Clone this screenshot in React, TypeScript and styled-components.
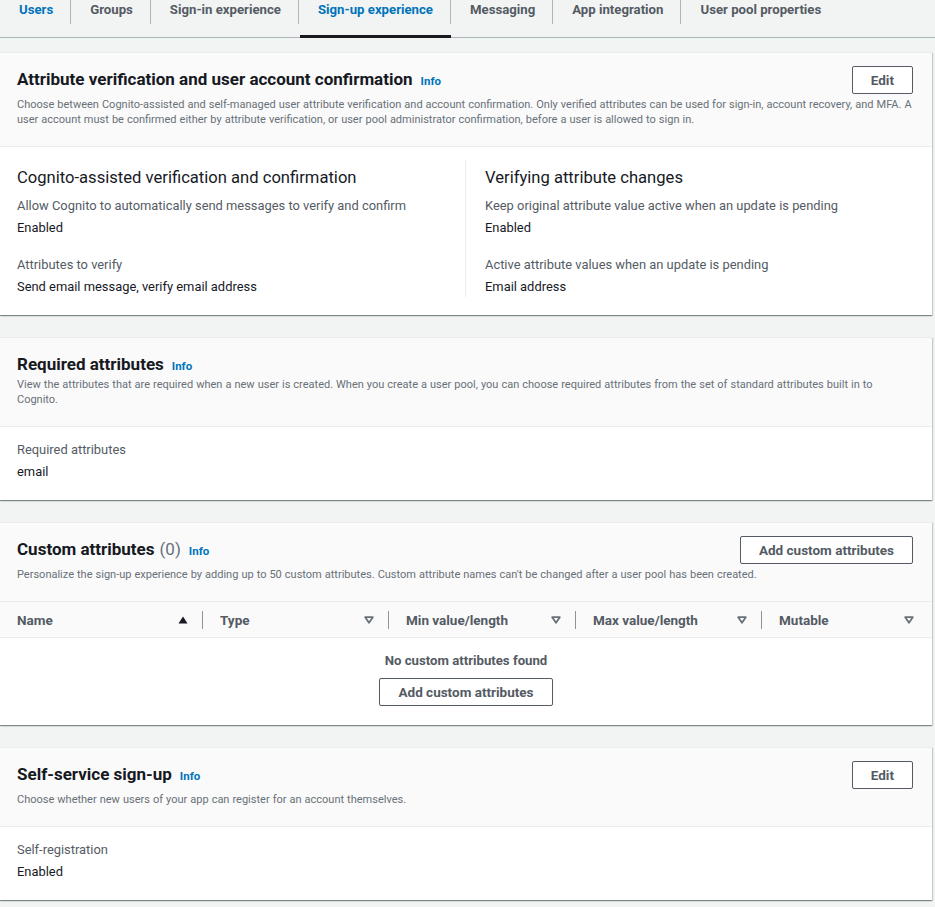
import React from "react";
import styled, { createGlobalStyle } from "styled-components";

const FONT = `"Amazon Ember", Roboto, "Helvetica Neue", Arial, sans-serif`;

const GlobalStyle = createGlobalStyle`
  html, body { margin: 0; padding: 0; }
  body {
    background: #f2f3f3;
    font-family: ${FONT};
    color: #16191f;
    -webkit-font-smoothing: antialiased;
  }
  * { box-sizing: border-box; }
`;

const Page = styled.div`
  width: 935px;
  min-height: 907px;
  background: #f2f3f3;
  overflow: hidden;
`;

const TabBar = styled.nav`
  display: flex;
  height: 38px;
  border-bottom: 1px solid #aab7b8;
`;

const Tab = styled.div<{ $active?: boolean; $link?: boolean; $last?: boolean }>`
  position: relative;
  padding: 1px 18px 0 19px;
  font-size: 13.2px;
  line-height: 18px;
  font-weight: 700;
  color: ${(p) => (p.$active || p.$link ? "#0073bb" : "#545b64")};
  white-space: nowrap;
  &::after {
    content: "";
    display: ${(p) => (p.$last ? "none" : "block")};
    position: absolute;
    right: 0;
    top: 0;
    width: 1px;
    height: 24px;
    background: #aab7b8;
  }
  &::before {
    content: "";
    display: ${(p) => (p.$active ? "block" : "none")};
    position: absolute;
    left: 1px;
    right: 0;
    bottom: -1px;
    height: 3px;
    background: #16191f;
  }
`;

const Main = styled.main`
  display: flex;
  flex-direction: column;
  gap: 22px;
  padding: 14px 3px 0 0;
`;

const Card = styled.section`
  background: #ffffff;
  border-top: 1px solid #eaeded;
  box-shadow: 0 1px 1px 0 rgba(0, 28, 36, 0.3), 1px 1px 1px 0 rgba(0, 28, 36, 0.15),
    -1px 1px 1px 0 rgba(0, 28, 36, 0.15);
`;

const CardHeader = styled.header`
  background: #fafafa;
  padding: 13px 19px 19px 17px;
  border-bottom: 1px solid #eaeded;
`;

const HeaderRow = styled.div`
  display: flex;
  align-items: flex-start;
  justify-content: space-between;
`;

const Title = styled.h2`
  margin: 2px 0 0;
  height: 22px;
  font-size: 17px;
  line-height: 22px;
  font-weight: 700;
  color: #16191f;
  display: flex;
  align-items: baseline;
`;

const Counter = styled.span`
  font-weight: 400;
  color: #687078;
  margin-left: 5px;
`;

const InfoLink = styled.a`
  font-size: 11.5px;
  line-height: 14px;
  font-weight: 700;
  color: #0073bb;
  margin-left: 8px;
  text-decoration: none;
`;

const Description = styled.p<{ $afterAction?: boolean }>`
  margin: ${(p) => (p.$afterAction ? "3px" : "2px")} 0 0;
  font-size: 11px;
  word-spacing: 0.3px;
  line-height: 15px;
  color: #687078;
`;

const Button = styled.button`
  height: 28px;
  padding: 0 18px;
  background: #ffffff;
  border: 1px solid #545b64;
  border-radius: 2px;
  font-family: ${FONT};
  font-size: 13.5px;
  font-weight: 700;
  color: #545b64;
  cursor: pointer;
  white-space: nowrap;
`;

const Body = styled.div`
  padding: 13px 19px 18px 17px;
`;

const Columns = styled.div`
  display: grid;
  grid-template-columns: 1fr 1fr;
`;

const Column = styled.div<{ $divided?: boolean }>`
  padding-left: ${(p) => (p.$divided ? "19px" : "0")};
  border-left: ${(p) => (p.$divided ? "1px solid #eaeded" : "none")};
`;

const SubHeading = styled.h3`
  margin: 7px 0 7px;
  font-size: 16.6px;
  line-height: 22px;
  font-weight: 400;
  color: #16191f;
`;

const Field = styled.div`
  & + & {
    margin-top: 17px;
  }
`;

const Label = styled.div`
  font-size: 12.9px;
  line-height: 20px;
  color: #545b64;
`;

const Value = styled.div`
  font-size: 12.9px;
  line-height: 20px;
  margin-top: 2px;
  color: #16191f;
`;

const TableHead = styled.div`
  display: grid;
  grid-template-columns: 203px 186px 187px 186px 1fr;
  height: 36px;
  background: #fafafa;
  border-bottom: 1px solid #eaeded;
`;

const HeadCell = styled.div<{ $divider?: boolean }>`
  position: relative;
  display: flex;
  align-items: center;
  justify-content: space-between;
  padding: 0 ${(p) => (p.$divider ? "15px" : "18px")} 0 17px;
  font-size: 13.5px;
  font-weight: 700;
  color: #545b64;
  &::after {
    content: "";
    display: ${(p) => (p.$divider ? "block" : "none")};
    position: absolute;
    right: 0;
    top: 9px;
    width: 1px;
    height: 18px;
    background: #879596;
  }
`;

const Empty = styled.div`
  display: flex;
  flex-direction: column;
  align-items: center;
  padding: 13px 0 19px;
`;

const EmptyText = styled.div`
  font-size: 13.2px;
  line-height: 20px;
  font-weight: 700;
  color: #545b64;
  margin-bottom: 7px;
`;

const SortIcon = ({ active }: { active?: boolean }) =>
  active ? (
    <svg width="10" height="8" viewBox="0 0 10 8" aria-hidden>
      <path d="M5 0.5 L9.5 7.5 L0.5 7.5 Z" fill="#16191f" />
    </svg>
  ) : (
    <svg width="10" height="8" viewBox="0 0 10 8" aria-hidden>
      <path d="M1.2 1.2 L8.8 1.2 L5 6.8 Z" fill="none" stroke="#687078" strokeWidth="1.8" strokeLinejoin="round" />
    </svg>
  );

const tabs = [
  "Users",
  "Groups",
  "Sign-in experience",
  "Sign-up experience",
  "Messaging",
  "App integration",
  "User pool properties",
];

const columns = ["Name", "Type", "Min value/length", "Max value/length", "Mutable"];

export default function App() {
  return (
    <Page>
      <GlobalStyle />
      <TabBar>
        {tabs.map((t, i) => (
          <Tab
            key={t}
            $active={t === "Sign-up experience"}
            $link={t === "Users"}
            $last={i === tabs.length - 1}
          >
            {t}
          </Tab>
        ))}
      </TabBar>
      <Main>
        <Card>
          <CardHeader>
            <HeaderRow>
              <Title>
                Attribute verification and user account confirmation
                <InfoLink>Info</InfoLink>
              </Title>
              <Button>Edit</Button>
            </HeaderRow>
            <Description $afterAction>
              Choose between Cognito-assisted and self-managed user attribute verification and account
              confirmation. Only verified attributes can be used for sign-in, account recovery, and MFA. A
              user account must be confirmed either by attribute verification, or user pool administrator
              confirmation, before a user is allowed to sign in.
            </Description>
          </CardHeader>
          <Body>
            <Columns>
              <Column>
                <SubHeading>Cognito-assisted verification and confirmation</SubHeading>
                <Field>
                  <Label>Allow Cognito to automatically send messages to verify and confirm</Label>
                  <Value>Enabled</Value>
                </Field>
                <Field>
                  <Label>Attributes to verify</Label>
                  <Value>Send email message, verify email address</Value>
                </Field>
              </Column>
              <Column $divided>
                <SubHeading>Verifying attribute changes</SubHeading>
                <Field>
                  <Label>Keep original attribute value active when an update is pending</Label>
                  <Value>Enabled</Value>
                </Field>
                <Field>
                  <Label>Active attribute values when an update is pending</Label>
                  <Value>Email address</Value>
                </Field>
              </Column>
            </Columns>
          </Body>
        </Card>

        <Card>
          <CardHeader>
            <HeaderRow>
              <Title>
                Required attributes
                <InfoLink>Info</InfoLink>
              </Title>
            </HeaderRow>
            <Description>
              View the attributes that are required when a new user is created. When you create a user pool,
              you can choose required attributes from the set of standard attributes built in to Cognito.
            </Description>
          </CardHeader>
          <Body>
            <Field>
              <Label>Required attributes</Label>
              <Value>email</Value>
            </Field>
          </Body>
        </Card>

        <Card>
          <CardHeader>
            <HeaderRow>
              <Title>
                Custom attributes
                <Counter>(0)</Counter>
                <InfoLink>Info</InfoLink>
              </Title>
              <Button>Add custom attributes</Button>
            </HeaderRow>
            <Description $afterAction>
              Personalize the sign-up experience by adding up to 50 custom attributes. Custom attribute names
              can't be changed after a user pool has been created.
            </Description>
          </CardHeader>
          <TableHead>
            {columns.map((c, i) => (
              <HeadCell key={c} $divider={i < columns.length - 1}>
                <span>{c}</span>
                <SortIcon active={i === 0} />
              </HeadCell>
            ))}
          </TableHead>
          <Empty>
            <EmptyText>No custom attributes found</EmptyText>
            <Button>Add custom attributes</Button>
          </Empty>
        </Card>

        <Card>
          <CardHeader>
            <HeaderRow>
              <Title>
                Self-service sign-up
                <InfoLink>Info</InfoLink>
              </Title>
              <Button>Edit</Button>
            </HeaderRow>
            <Description $afterAction>
              Choose whether new users of your app can register for an account themselves.
            </Description>
          </CardHeader>
          <Body>
            <Field>
              <Label>Self-registration</Label>
              <Value>Enabled</Value>
            </Field>
          </Body>
        </Card>
      </Main>
    </Page>
  );
}
